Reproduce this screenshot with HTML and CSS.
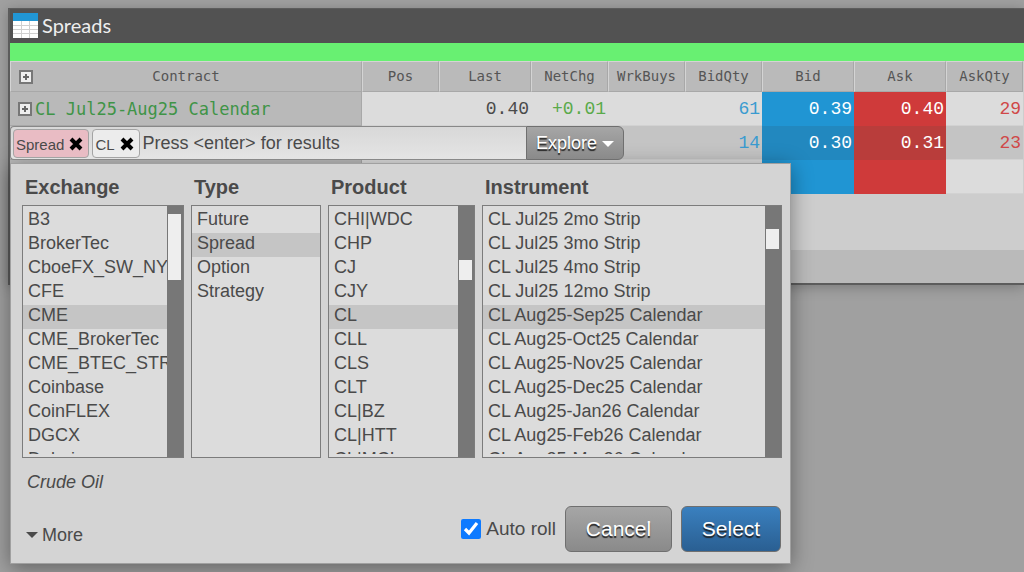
FILE: index.html
```html
<!DOCTYPE html>
<html lang="en">
<head>
<meta charset="utf-8">
<title>Spreads</title>
<link rel="stylesheet" href="styles.css">
<meta name="viewport" content="width=device-width, initial-scale=1.0">
</head>
<body>
<div class="window">
  <div class="titlebar">
    <svg class="logo" viewBox="0 0 25 25" width="25" height="25">
      <rect width="25" height="25" fill="#fff"/>
      <rect width="25" height="8" fill="#2196d4"/>
      <path d="M0 12.5h25M0 16.5h25M0 20.5h25M8.5 8v17M16.5 8v17" stroke="#d0d0d0" fill="none"/>
    </svg>
    <span class="title">Spreads</span>
  </div>
  <div class="status"></div>
  <div class="market">
    <table class="grid">
      <colgroup>
        <col><col class="narrow"><col class="wide"><col class="narrow"><col class="narrow">
        <col class="narrow"><col class="wide"><col class="wide"><col class="narrow">
      </colgroup>
      <thead>
        <tr>
          <th class="contract-head"><button class="expand" aria-label="Expand all"></button>Contract</th>
          <th>Pos</th><th>Last</th><th>NetChg</th><th>WrkBuys</th>
          <th>BidQty</th><th>Bid</th><th>Ask</th><th>AskQty</th>
        </tr>
      </thead>
      <tbody>
        <tr>
          <td class="contract"><div class="contract-name"><button class="expand" aria-label="Expand row"></button>CL Jul25-Aug25 Calendar</div></td>
          <td></td><td>0.40</td><td class="up">+0.01</td><td></td>
          <td class="bidqty">61</td><td class="bid">0.39</td><td class="ask">0.40</td><td class="askqty">29</td>
        </tr>
        <tr class="active">
          <td class="contract"></td>
          <td></td><td></td><td></td><td></td>
          <td class="bidqty">14</td><td class="bid">0.30</td><td class="ask">0.31</td><td class="askqty">23</td>
        </tr>
        <tr>
          <td class="contract"></td>
          <td></td><td></td><td></td><td></td>
          <td></td><td class="bid"></td><td class="ask"></td><td></td>
        </tr>
      </tbody>
    </table>

    <!-- opens over the second row -->
    <div class="finder">
      <div class="search">
        <div class="search-field">
          <span class="tag tag-type">Spread
            <button class="remove" aria-label="Remove Spread"><svg viewBox="0 0 14 14" width="14" height="14"><path d="M2 2l10 10M12 2l-10 10" stroke="#000" stroke-width="4"/></svg></button>
          </span>
          <span class="tag">CL
            <button class="remove" aria-label="Remove CL"><svg viewBox="0 0 14 14" width="14" height="14"><path d="M2 2l10 10M12 2l-10 10" stroke="#000" stroke-width="4"/></svg></button>
          </span>
          <input type="text" class="query" aria-label="Search instruments" placeholder="Press &lt;enter&gt; for results">
        </div>
        <button class="btn explore">Explore <span class="caret"></span></button>
      </div>

      <div class="panel">
        <div class="lists">
          <div class="column">
            <label for="exchange">Exchange</label>
            <div class="listbox">
              <select id="exchange" size="10">
                <option>B3</option>
                <option>BrokerTec</option>
                <option>CboeFX_SW_NY</option>
                <option>CFE</option>
                <option selected>CME</option>
                <option>CME_BrokerTec</option>
                <option>CME_BTEC_STREAM</option>
                <option>Coinbase</option>
                <option>CoinFLEX</option>
                <option>DGCX</option>
                <option>Dubai</option>
              </select>
              <div class="track"><div class="thumb thumb-exchange"></div></div>
            </div>
          </div>
          <div class="column">
            <label for="type">Type</label>
            <div class="listbox">
              <select id="type" size="10">
                <option>Future</option>
                <option selected>Spread</option>
                <option>Option</option>
                <option>Strategy</option>
              </select>
            </div>
          </div>
          <div class="column">
            <label for="product">Product</label>
            <div class="listbox">
              <select id="product" size="10">
                <option>CHI|WDC</option>
                <option>CHP</option>
                <option>CJ</option>
                <option>CJY</option>
                <option selected>CL</option>
                <option>CLL</option>
                <option>CLS</option>
                <option>CLT</option>
                <option>CL|BZ</option>
                <option>CL|HTT</option>
                <option>CL|MCL</option>
              </select>
              <div class="track"><div class="thumb thumb-product"></div></div>
            </div>
          </div>
          <div class="column">
            <label for="instrument">Instrument</label>
            <div class="listbox">
              <select id="instrument" size="10">
                <option>CL Jul25 2mo Strip</option>
                <option>CL Jul25 3mo Strip</option>
                <option>CL Jul25 4mo Strip</option>
                <option>CL Jul25 12mo Strip</option>
                <option selected>CL Aug25-Sep25 Calendar</option>
                <option>CL Aug25-Oct25 Calendar</option>
                <option>CL Aug25-Nov25 Calendar</option>
                <option>CL Aug25-Dec25 Calendar</option>
                <option>CL Aug25-Jan26 Calendar</option>
                <option>CL Aug25-Feb26 Calendar</option>
                <option>CL Aug25-Mar26 Calendar</option>
              </select>
              <div class="track"><div class="thumb thumb-instrument"></div></div>
            </div>
          </div>
        </div>
        <div class="description">Crude Oil</div>
        <div class="actions">
          <button class="more"><span class="caret"></span>More</button>
          <label class="autoroll"><input type="checkbox" checked>Auto roll</label>
          <button class="btn big">Cancel</button>
          <button class="btn big primary">Select</button>
        </div>
      </div>
    </div>
  </div>
  <div class="footer"></div>
</div>
</body>
</html>
```
FILE: styles.css
```css
* {
  box-sizing: border-box;
}
body {
  margin: 0;
  padding: 8px 0 0 8px;
  min-height: 100vh;
  overflow: hidden;
  background-color: #a0a0a0;
  color: #4a4a4a;
  font-family: "Liberation Sans", Arial, sans-serif;
  font-size: 18px;
}
button, input, select {
  font: inherit;
  color: inherit;
}
button {
  padding: 0;
  border: none;
  background: none;
}
.window {
  border: 2px solid #5c5c5c;
  border-width: 1px 0 2px 2px;
  box-shadow: 0 2px 12px rgba(0,0,0,0.25);
}
.titlebar {
  display: flex;
  align-items: center;
  gap: 4px;
  height: 34px;
  padding: 0 3px 2px;
  background-color: #525252;
  color: #eee;
  font-family: Lato, sans-serif;
  font-size: 20px;
}
.status {
  height: 18px;
  background-color: #68f072;
}

/* market grid */
.market {
  position: relative;
  padding: 0 1px 56px 0;
  background-color: #cdcdcd;
}
.footer {
  height: 33px;
  background-color: #bababa;
}
.grid {
  width: 100%;
  table-layout: fixed;
  border-spacing: 0;
}
.narrow {
  width: 77px;
}
.wide {
  width: 92px;
}
.grid th {
  height: 31px;
  padding: 0 0 2px;
  background-color: #bababa;
  border: 1px solid #a8a8a8;
  border-top-color: #d4d4d4;
  border-left-color: #d4d4d4;
  color: #555;
  font-family: "DejaVu Sans Mono", monospace;
  font-size: 14px;
  font-weight: normal;
}
.grid td {
  height: 34px;
  padding: 0 2px;
  background-color: #dcdcdc;
  border-bottom: 1px solid #d2d2d2;
  font-family: "Liberation Mono", monospace;
  font-size: 18px;
  text-align: right;
}
.grid .contract {
  padding: 0 8px;
  background-color: #b9b9b9;
  border-right: 1px solid #a8a8a8;
  border-bottom-color: #a8a8a8;
  color: #3f9447;
  font-family: "DejaVu Sans Mono", monospace;
  font-size: 17px;
  text-align: left;
}
.contract-name {
  display: flex;
  align-items: center;
  gap: 3px;
}
.expand {
  width: 14px;
  height: 14px;
  border: 2px solid #777;
  background:
    linear-gradient(#666, #666) center / 6px 2px no-repeat,
    linear-gradient(#666, #666) center / 2px 6px no-repeat,
    #eee;
}
.grid .contract-head {
  padding: 0 8px 2px;
}
.contract-head .expand {
  float: left;
  margin: 2px -14px 0 0;
}
.grid .active td {
  background-color: #c4c4c4;
}
.grid .up {
  color: #5aaa4a;
}
.grid .bidqty {
  color: #3a9bd0;
}
.grid .askqty {
  color: #d04848;
}
.grid .bid, .grid .ask {
  border-bottom: none;
  color: #fff;
}
.grid .bid {
  background-color: #2095d3;
}
.grid .ask {
  background-color: #cf3a3a;
}
.grid .active .bid {
  background-color: #2288bf;
}
.grid .active .ask {
  background-color: #b93d3b;
}

/* search bar */
.finder {
  position: absolute;
  top: 65px;
  left: 0;
}
.search {
  display: flex;
  width: 614px;
  height: 34px;
}
.search-field {
  display: flex;
  flex: 1;
  align-items: center;
  gap: 3px;
  padding: 0 2px;
  border: 1px solid #888;
  border-right: none;
  border-radius: 4px 0 0 4px;
  background-image: linear-gradient(#d8d8d8, #e4e4e4);
}
.tag {
  display: flex;
  align-items: center;
  gap: 5px;
  height: 29px;
  padding: 2px 5px 0 2px;
  border: 1px solid #a4a4a4;
  border-radius: 4px;
  background-color: #ececec;
  font-size: 15px;
}
.tag-type {
  background-color: #e9bcc4;
}
.remove {
  display: flex;
}
.query {
  flex: 1;
  min-width: 0;
  padding: 1px 0 0;
  border: none;
  outline: none;
  background: none;
}
.query::placeholder {
  color: #4a4a4a;
}
.btn {
  border: 1px solid #6f6f6f;
  border-radius: 6px;
  background-image: linear-gradient(#a6a6a6, #8a8a8a);
  color: #fff;
  text-shadow: 0 2px 1px #222;
}
.explore {
  width: 98px;
  border-radius: 0 6px 6px 0;
}
.caret {
  display: inline-block;
  border: 6px solid transparent;
  border-top-color: currentColor;
  border-bottom: none;
  vertical-align: middle;
}

/* drop down panel */
.panel {
  margin-top: 3px;
  padding: 8px 8px 11px 11px;
  border: 1px solid #a0a0a0;
  background-color: #d4d4d4;
  box-shadow: 0 4px 20px rgba(0,0,0,0.4);
}
.lists {
  display: grid;
  grid-template-columns: 162px 130px 147px 300px;
  gap: 7px;
}
.column label {
  display: block;
  padding-left: 3px;
  font-size: 20px;
  font-weight: bold;
  line-height: 30px;
}
.listbox {
  display: flex;
  height: 253px;
  margin-top: 3px;
  border: 1px solid #7c7c7c;
  background-color: #dcdcdc;
}
.listbox select {
  flex: 1;
  min-width: 0;
  height: 100%;
  padding: 3px 0 0;
  border: none;
  border-bottom: 3px solid transparent;
  border-radius: 0;
  outline: none;
  background: none;
  overflow: hidden;
  scrollbar-width: none;
}
.listbox option {
  height: 24px;
  min-height: 24px;
  padding: 0 5px;
  line-height: 23px;
}
.listbox option:checked {
  background-image: linear-gradient(#c5c5c5, #c5c5c5);
  -webkit-text-fill-color: #4a4a4a;
}
.track {
  width: 16px;
  padding: 0 2px 0 1px;
  background-color: #777;
}
.thumb {
  height: 20px;
  background-color: #eee;
}
.thumb-exchange {
  height: 66px;
  margin-top: 8px;
}
.thumb-product {
  margin-top: 54px;
}
.thumb-instrument {
  margin-top: 23px;
}
.description {
  padding: 0 5px;
  font-style: italic;
  line-height: 48px;
}
.actions {
  display: flex;
  align-items: center;
  gap: 9px;
  padding-right: 1px;
}
.more {
  display: flex;
  align-items: center;
  gap: 4px;
  margin: 12px auto 0 4px;
}
.autoroll {
  display: flex;
  align-items: center;
  gap: 5px;
  font-size: 19px;
}
.autoroll input {
  width: 20px;
  height: 20px;
  margin: 0;
  accent-color: #0d7aff;
}
.big {
  width: 107px;
  height: 46px;
  font-size: 21px;
}
.primary {
  width: 100px;
  background-image: linear-gradient(#3a80bf, #2a5f92);
}
```
